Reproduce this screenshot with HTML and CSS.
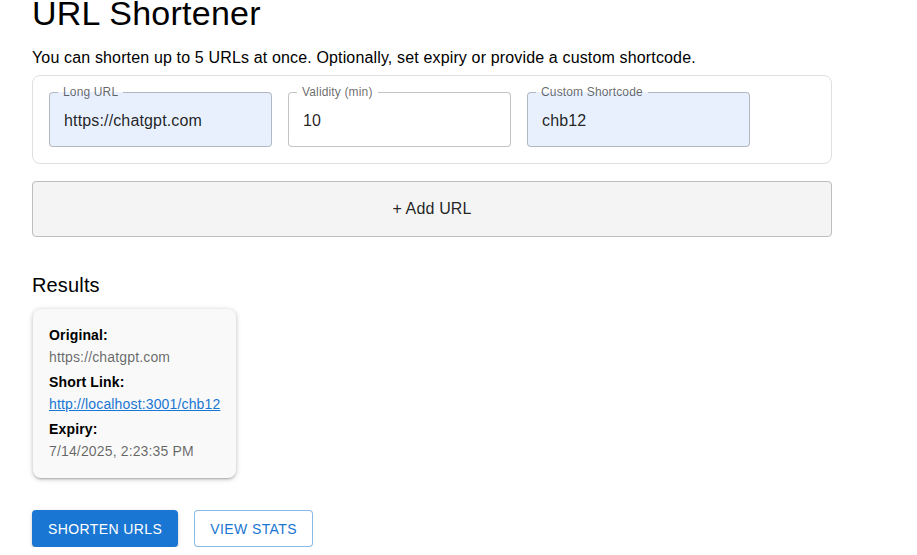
FILE: index.html
```html
<!DOCTYPE html>
<html lang="en">
<head>
<meta charset="utf-8">
<title>URL Shortener</title>
<link rel="stylesheet" href="styles.css">
</head>
<body>
<main class="page">
  <h1 class="title">URL Shortener</h1>
  <p class="subtitle">You can shorten up to 5 URLs at once. Optionally, set expiry or provide a custom shortcode.</p>

  <section class="url-box">
    <div class="url-row">
      <fieldset class="field filled">
        <legend>Long URL</legend>
        <input class="field-input" type="text" value="https://chatgpt.com">
      </fieldset>
      <fieldset class="field">
        <legend>Validity (min)</legend>
        <input class="field-input" type="text" value="10">
      </fieldset>
      <fieldset class="field filled">
        <legend>Custom Shortcode</legend>
        <input class="field-input" type="text" value="chb12">
      </fieldset>
    </div>
  </section>

  <button class="add-btn" type="button">+ Add URL</button>

  <h2 class="results-title">Results</h2>
  <div class="results">
    <article class="result-card">
      <div class="label">Original:</div>
      <div class="value">https://chatgpt.com</div>
      <div class="label">Short Link:</div>
      <div class="value"><a class="link" href="#">http://localhost:3001/chb12</a></div>
      <div class="label">Expiry:</div>
      <div class="value last">7/14/2025, 2:23:35 PM</div>
    </article>
  </div>

  <div class="actions">
    <button class="btn btn-contained" type="button">Shorten URLs</button>
    <button class="btn btn-outlined" type="button">View Stats</button>
  </div>
</main>
</body>
</html>
```

FILE: styles.css
```css
* { box-sizing: border-box; }

html, body {
  margin: 0;
  padding: 0;
  background: #fff;
}

body {
  font-family: "Liberation Sans", Arial, sans-serif;
  color: rgba(0, 0, 0, 0.87);
  letter-spacing: 0.15px;
  overflow: hidden;
}

.page {
  padding: 0 32px;
  width: 864px;
}

.title {
  margin: -8px 0 12px;
  font-size: 34px;
  font-weight: 400;
  line-height: 42px;
  letter-spacing: 0.25px;
  color: #000;
}

.subtitle {
  margin: 0 0 5px;
  font-size: 16px;
  line-height: 24px;
  color: #000;
}

.url-box {
  border: 1px solid #e0e0e0;
  border-radius: 8px;
  padding: 9px 16px 16px;
}

.url-row {
  display: flex;
  gap: 16px;
}

.field {
  width: 223px;
  margin: 0;
  padding: 0 14px 4px;
  border: 1px solid rgba(0, 0, 0, 0.23);
  border-radius: 4px;
  background: #fff;
  min-inline-size: 0;
}

.field.filled {
  background: #e8f0fe;
}

.field legend {
  margin-left: -6px;
  padding: 0 5px;
  font-size: 12px;
  line-height: 14px;
  color: rgba(0, 0, 0, 0.6);
}

.field-input {
  display: block;
  width: 100%;
  height: 43px;
  padding: 0;
  border: 0;
  outline: none;
  background: transparent;
  font-family: inherit;
  font-size: 16px;
  letter-spacing: 0.15px;
  color: rgba(0, 0, 0, 0.87);
}

.add-btn {
  display: block;
  width: 100%;
  height: 56px;
  margin-top: 17px;
  border: 1px solid #bdbdbd;
  border-radius: 4px;
  background: #f4f4f4;
  font-family: inherit;
  font-size: 16px;
  letter-spacing: 0.15px;
  color: rgba(0, 0, 0, 0.87);
}

.results-title {
  margin: 32px 0 8px;
  font-size: 20px;
  font-weight: 400;
  line-height: 32px;
  color: #000;
}

.results {
  display: flex;
  padding-left: 1px;
}

.result-card {
  padding: 15px 16px 16px;
  background: #f9f9f9;
  border-radius: 8px;
  box-shadow: 0 2px 2px -1px rgba(0, 0, 0, 0.2), 0 1px 4px 0 rgba(0, 0, 0, 0.14), 0 1px 6px 0 rgba(0, 0, 0, 0.12);
  font-size: 14px;
  line-height: 22px;
}

.label {
  font-weight: 700;
  color: #000;
}

.value {
  margin-bottom: 3px;
  color: rgba(0, 0, 0, 0.6);
}

.value.last {
  margin-bottom: 0;
}

.link {
  color: #1976d2;
  text-decoration: underline;
}

.actions {
  display: flex;
  gap: 16px;
  margin-top: 32px;
}

.btn {
  height: 37px;
  border-radius: 4px;
  font-family: inherit;
  font-size: 14px;
  font-weight: 500;
  letter-spacing: 0.4px;
  text-transform: uppercase;
  line-height: 24px;
}

.btn-contained {
  padding: 6px 16px;
  border: 0;
  background: #1976d2;
  color: #fff;
  box-shadow: 0 3px 1px -2px rgba(0, 0, 0, 0.2), 0 2px 2px 0 rgba(0, 0, 0, 0.14), 0 1px 5px 0 rgba(0, 0, 0, 0.12);
}

.btn-outlined {
  padding: 5px 15px;
  border: 1px solid rgba(25, 118, 210, 0.5);
  background: #fff;
  color: #1976d2;
}
```
